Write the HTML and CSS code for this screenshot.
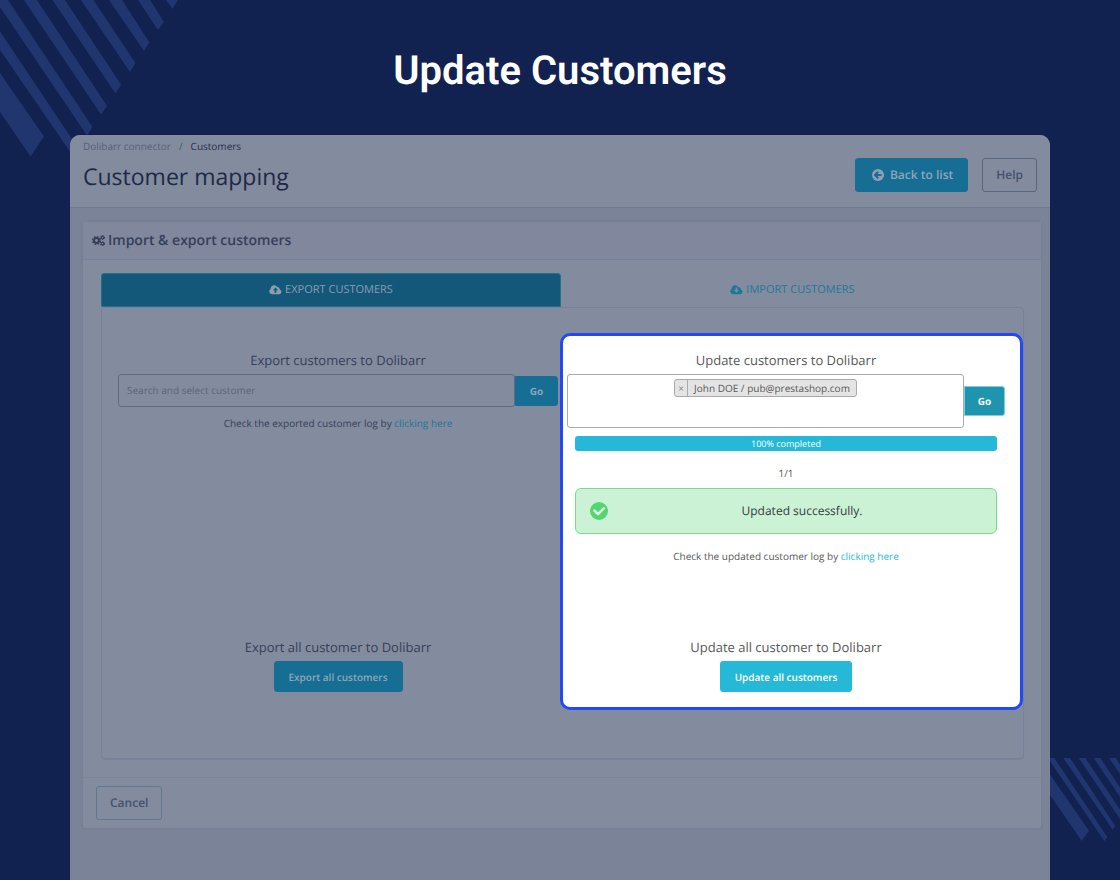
FILE: index.html
```html
<!DOCTYPE html>
<html lang="en">
<head>
<meta charset="utf-8">
<title>Update Customers</title>
<link rel="stylesheet" href="styles.css">
</head>
<body>
<svg class="stripes stripes-start" viewBox="0 0 178 157" aria-hidden="true">
  <path d="M0 73L44 136.500L30.500 156.500L0 112ZM0 31.500L78 148L73 156L0 50ZM0 0H8L92.500 127L87 135.500L0 7ZM24 0H37L107 106L101 114.500ZM52.500 0H65L121 84.500L115.500 93.500ZM81 0H93.500L135.500 63L130 72ZM109 0H122L149.500 42.500L144 51ZM138 0H150L164 22L158 30ZM166 0H178L172.500 9Z"/>
</svg>
<svg class="stripes stripes-end" viewBox="0 0 70 84" aria-hidden="true">
  <path d="M0 16.500L39 72.700L31.700 83L0 37ZM0 0H4.300L57.300 79L54.300 83L0 3ZM13.300 0H20L65.300 68L62.700 71.700ZM28.700 0H35.300L70 51.500V61ZM43.700 0H50.300L70 29.500V39ZM59 0H65.700L70 6.500V16Z"/>
</svg>

<h1 class="banner">Update Customers</h1>

<main class="app">
  <header class="app-header">
    <div class="heading">
      <nav class="breadcrumb" aria-label="Breadcrumb">
        <a href="#connector">Dolibarr connector</a>
        <span class="slash">/</span>
        <span class="current">Customers</span>
      </nav>
      <h2 class="page-title">Customer mapping</h2>
    </div>
    <div class="actions">
      <button class="btn btn-primary" type="button">
        <svg class="icon-back" viewBox="0 0 12 12" aria-hidden="true"><circle cx="6" cy="6" r="6"/><path d="M6.200 2.800L3 6L6.200 9.200M3.200 6H9.500"/></svg>
        Back to list
      </button>
      <button class="btn btn-outline" type="button">Help</button>
    </div>
  </header>

  <section class="card">
    <h3 class="card-title">
      <svg class="icon-cogs" viewBox="0 0 14 12" aria-hidden="true">
        <circle class="teeth" cx="4.800" cy="6" r="4"/>
        <circle class="ring" cx="4.800" cy="6" r="2.700"/>
        <circle class="small-teeth" cx="11.300" cy="2.700" r="2.100"/>
        <circle class="small-ring" cx="11.300" cy="2.700" r="1.400"/>
        <circle class="small-teeth" cx="11.300" cy="9.300" r="2.100"/>
        <circle class="small-ring" cx="11.300" cy="9.300" r="1.400"/>
      </svg>
      Import &amp; export customers
    </h3>
    <div class="card-body">
      <div class="tabs" role="tablist">
        <button class="tab tab-active" type="button" role="tab" aria-selected="true">
          <svg class="icon-cloud" viewBox="0 0 14 10" aria-hidden="true"><path fill-rule="evenodd" d="M3.200 10A3.100 3.100 0 0 1 1.800 4.200A3.800 3.800 0 0 1 9 2.300A2.200 2.200 0 0 1 11.500 4.800A2.700 2.700 0 0 1 11.200 10ZM7 2.800L4.200 5.700H6V8.300H8V5.700H9.800Z"/></svg>
          EXPORT CUSTOMERS
        </button>
        <button class="tab" type="button" role="tab" aria-selected="false">
          <svg class="icon-cloud" viewBox="0 0 14 10" aria-hidden="true"><path fill-rule="evenodd" d="M3.200 10A3.100 3.100 0 0 1 1.800 4.200A3.800 3.800 0 0 1 9 2.300A2.200 2.200 0 0 1 11.500 4.800A2.700 2.700 0 0 1 11.200 10ZM7 8.300L9.800 5.400H8V2.800H6V5.400H4.200Z"/></svg>
          IMPORT CUSTOMERS
        </button>
      </div>

      <div class="tab-panel" role="tabpanel">
        <section class="column">
          <label class="label" for="export-search">Export customers to Dolibarr</label>
          <div class="picker">
            <input class="search" id="export-search" type="text" placeholder="Search and select customer">
            <button class="btn btn-primary btn-go" type="button">Go</button>
          </div>
          <p class="log">Check the exported customer log by <a href="#export-log">clicking here</a></p>
          <div class="bulk">
            <p class="label">Export all customer to Dolibarr</p>
            <button class="btn btn-primary btn-bulk" type="button">Export all customers</button>
          </div>
        </section>

        <section class="column spotlight">
          <label class="label" for="update-search">Update customers to Dolibarr</label>
          <div class="picker">
            <div class="multi">
              <span class="tag"><button class="tag-remove" type="button" aria-label="Remove John DOE">×</button><span class="tag-text">John DOE / pub@prestashop.com</span></span>
              <input class="multi-input" id="update-search" type="text">
            </div>
            <button class="btn btn-primary btn-go" type="button">Go</button>
          </div>
          <div class="progress">100% completed</div>
          <p class="count">1/1</p>
          <div class="alert" role="status">
            <svg class="icon-check" viewBox="0 0 18 18" aria-hidden="true"><circle cx="9" cy="9" r="9"/><path d="M4.500 8.700L8 12.200L13.800 6.400"/></svg>
            <span class="alert-text">Updated successfully.</span>
          </div>
          <p class="log">Check the updated customer log by <a href="#update-log">clicking here</a></p>
          <div class="bulk">
            <p class="label">Update all customer to Dolibarr</p>
            <button class="btn btn-primary btn-bulk" type="button">Update all customers</button>
          </div>
        </section>
      </div>
    </div>
    <footer class="card-footer">
      <button class="btn btn-outline btn-cancel" type="button">Cancel</button>
    </footer>
  </section>
</main>
</body>
</html>
```
FILE: styles.css
```css
* { box-sizing: border-box; }

body {
  --surface: #838b9f;
  --line: #77829a;
  --text: #353f59;
  --accent: #166e94;
  --on-accent: #8fa5b8;
  --link: #1d7798;
  position: relative;
  display: flex;
  flex-direction: column;
  min-height: 100vh;
  margin: 0;
  overflow-x: hidden;
  background: #112150;
  color: var(--text);
  font: 10px/16px "Open Sans", "Noto Sans", sans-serif;
  text-rendering: geometricPrecision;
}

h1, h2, h3, p { margin: 0; }
button, input { font: inherit; color: inherit; text-rendering: inherit; }
button { cursor: pointer; }
a { color: var(--link); text-decoration: none; }

.stripes { position: absolute; fill: #21366e; }
.stripes-start { top: 0; left: 0; width: 178px; }
.stripes-end { right: 0; bottom: 38px; width: 70px; }

.banner {
  padding: 47px 0 40px;
  color: #fff;
  font: 600 40px/48px Roboto, sans-serif;
  text-align: center;
}

.app {
  position: relative;
  flex: 1;
  margin: 0 70px;
  border-radius: 10px 10px 0 0;
  background: #7a8397;
}

.app-header {
  display: flex;
  justify-content: space-between;
  padding: 3px 13px 15px;
  border-bottom: 1px solid #727c91;
  border-radius: 10px 10px 0 0;
  background: var(--surface);
}

.breadcrumb { display: flex; gap: 8px; }
.breadcrumb a { color: #565f77; }
.slash { color: #405b62; }
.current { color: #26304b; }
.page-title { padding-top: 6px; color: #1e2a44; font-size: 23px; font-weight: 400; line-height: 32px; }

.actions { display: flex; align-items: flex-start; gap: 14px; padding-top: 20px; }

.btn {
  display: flex;
  align-items: center;
  justify-content: center;
  height: 34px;
  padding: 0 13px;
  border: 1px solid;
  border-radius: 3px;
  font-size: 12px;
  font-weight: 600;
  white-space: nowrap;
}
.btn-primary { gap: 6px; padding: 0 14px 0 16px; border-color: var(--accent); background: var(--accent); color: var(--on-accent); }
.btn-outline { border-color: #57677f; background: transparent; color: #44526b; }

.icon-back { width: 12px; fill: #919fb2; }
.icon-back path { fill: none; stroke: var(--accent); stroke-width: 2; }

.card {
  margin: 14px 9px 0 13px;
  border-radius: 3px;
  background: var(--surface);
  box-shadow: 0 0 3px #6f7a90;
}
.card-title {
  display: flex;
  align-items: center;
  gap: 3px;
  height: 38px;
  padding: 0 9px;
  border-bottom: 1px solid var(--line);
  background: #81879d;
  font-size: 14px;
  font-weight: 600;
}
.icon-cogs { width: 13px; fill: none; stroke: var(--text); }
.teeth { stroke-width: 1.8; stroke-dasharray: 1.7 1.44; }
.ring { stroke-width: 2.2; }
.small-teeth { stroke-width: 1.2; stroke-dasharray: 1.1 1.1; }
.small-ring { stroke-width: 1.2; }

.card-body { padding: 13px 17px 17px 18px; }
.tabs { display: grid; grid-template-columns: 460fr 463fr; }
.tab {
  display: flex;
  align-items: center;
  justify-content: center;
  gap: 3px;
  height: 34px;
  padding: 0;
  border: 0;
  background: transparent;
  color: var(--link);
  font-size: 11px;
}
.tab-active { border: 1px solid #24718a; border-radius: 3px 3px 0 0; background: #145879; color: #8d9db0; }
.icon-cloud { width: 13px; fill: currentColor; }

.tab-panel {
  display: grid;
  grid-template-columns: 458fr 463fr;
  padding: 25px 0 48px;
  border: 2px solid var(--line);
  border-width: 1px 1px 2px;
  border-radius: 5px;
  box-shadow: 0 0 1px var(--line);
}

.column {
  display: flex;
  flex-direction: column;
  min-height: 377px;
  padding: 17px 2px 18px 16px;
  text-align: center;
}
.label { display: block; font-size: 13px; line-height: 20px; text-align: center; }
.picker { display: flex; align-items: center; padding-top: 4px; }

.search {
  flex: 1;
  min-width: 0;
  height: 33px;
  padding: 0 8px 2px;
  border: 1px solid #606b82;
  border-radius: 3px;
  background: transparent;
}
.search::placeholder { color: #5b657c; opacity: 1; }

.btn-go { width: 43px; height: 30px; padding: 0; border-radius: 0 3px 3px 0; font-size: 10px; font-weight: 700; }
.log { padding-top: 8px; }
.bulk { display: flex; flex-direction: column; align-items: center; gap: 4px; margin-top: auto; }
.btn-bulk { height: 31px; padding: 0 14px; font-size: 10px; }

.spotlight {
  --text: #555;
  --accent: #25b9d7;
  --on-accent: #fff;
  --link: #25b9d7;
  padding: 14px 15px 15px 4px;
  border: 3px solid #2449f2;
  border-radius: 10px;
  background: #fff;
  color: #585858;
}
.multi {
  display: flex;
  flex: 1;
  flex-direction: column;
  align-items: center;
  min-width: 0;
  height: 54px;
  padding: 4px;
  border: 1px solid #aaa;
  border-radius: 3px;
}
.multi-input { width: 100%; height: 20px; padding: 0; border: 0; outline: 0; background: transparent; }
.tag { display: flex; border: 1px solid #aaa; border-radius: 3px; background: #e4e4e4; }
.tag-remove { width: 13px; padding: 0; border: 0; border-right: 1px solid #aaa; background: transparent; color: #888; }
.tag-text { padding: 0 6px; }
.spotlight .btn-go { width: 41px; border-color: #7dcfdf; background: #1f94ae; }

.progress {
  margin: 8px 8px 0;
  border-radius: 3px;
  background: #25b9d7;
  color: #fff;
  font-size: 9px;
  line-height: 15px;
}
.count { padding-top: 14px; }
.alert {
  display: flex;
  align-items: center;
  height: 46px;
  margin: 7px 8px 6px;
  padding: 0 14px;
  border: 1px solid #77dc91;
  border-radius: 6px;
  background: #cbf2d4;
  color: #363a41;
}
.alert-text { flex: 1; padding-left: 14px; font-size: 12px; }
.icon-check { width: 18px; fill: #53d572; }
.icon-check path { fill: none; stroke: #d4f4dc; stroke-width: 2.6; stroke-linecap: round; stroke-linejoin: round; }

.card-footer { padding: 8px 13px 8px; border-top: 1px solid #7b849a; }
.btn-cancel { border-color: #627790; }
```
